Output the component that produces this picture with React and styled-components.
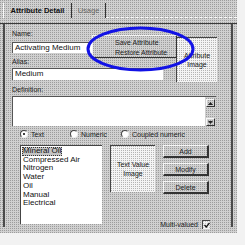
import React from "react";
import styled, { createGlobalStyle } from "styled-components";

const dither = (light, dark) =>
  `conic-gradient(at 1px 1px, ${light} 75%, ${dark} 0) 0 0 / 2px 2px`;

const GlobalStyle = createGlobalStyle`
  html, body { margin: 0; padding: 0; background: #f2f2f2; }
  body { font-family: "Liberation Sans", Arial, sans-serif; color: #1e1e1e; }
  * { box-sizing: border-box; }
`;

const Window = styled.div`
  position: relative;
  width: 237px;
  height: 233px;
  background: ${dither("#d0d0d0", "#9c9c9c")};
`;

const TabBar = styled.div`
  display: flex;
  height: 24px;
  padding: 3px 0 0 3px;
  border-bottom: 1px solid #3a3a3a;
`;

const Tab = styled.div`
  width: ${(p) => p.$w}px;
  height: 15px;
  display: flex;
  align-items: center;
  justify-content: center;
  font-size: 7.5px;
  font-weight: ${(p) => (p.$active ? "bold" : "normal")};
  color: ${(p) => (p.$active ? "#111" : "#666")};
  border-right: 1px solid #333;
  border-left: ${(p) => (p.$first ? "1px solid #fafafa" : "none")};
`;

const TabFiller = styled.div`
  flex: 1;
  height: 15px;
  border-bottom: 1px dashed #fafafa;
`;

const Panel = styled.div`
  margin-left: 3px;
  width: 230px;
  height: 203px;
  border-left: 2px solid #4a4a4a;
  border-right: 2px solid #4a4a4a;
  padding: 5px 0 0 7px;
`;

const TopRow = styled.div`
  display: flex;
  align-items: flex-start;
`;

const Fields = styled.div`
  width: 151px;
  display: flex;
  flex-direction: column;
`;

const Label = styled.div`
  font-size: 7px;
  line-height: 9px;
  height: 9px;
  margin-top: ${(p) => p.$mt || 0}px;
  color: #222;
`;

const TextBox = styled.div`
  height: ${(p) => p.$h || 11}px;
  width: ${(p) => p.$w || 151}px;
  margin-top: ${(p) => p.$mt || 0}px;
  background: #fff;
  border-top: 1px solid #555;
  border-left: 1px solid #555;
  font-size: 8px;
  line-height: 10px;
  padding-left: 2px;
  color: #111;
  white-space: nowrap;
  overflow: hidden;
`;

const ImageBox = styled.div`
  width: ${(p) => p.$w}px;
  height: ${(p) => p.$h}px;
  margin: ${(p) => p.$m || "0"};
  flex-shrink: 0;
  background: ${dither("#f4f4f4", "#b4b4b4")};
  border-top: 1px solid #444;
  border-left: 1px solid #444;
  display: flex;
  align-items: center;
  justify-content: center;
  text-align: center;
  font-size: 7px;
  line-height: 9px;
  color: #222;
`;

const TextArea = styled.div`
  margin-top: 2px;
  width: 204px;
  height: 30px;
  display: flex;
  border-top: 1px solid #555;
  border-left: 1px solid #555;
`;

const AreaBody = styled.div`
  flex: 1;
  background: #fff;
`;

const ScrollCol = styled.div`
  width: 11px;
  display: flex;
  flex-direction: column;
  justify-content: space-between;
  align-items: center;
  padding: 2px 0 0;
`;

const ScrollBtn = styled.div`
  width: 9px;
  height: 8px;
  border-top: 1px solid #f8f8f8;
  border-left: 1px solid #f8f8f8;
  border-right: 1px solid #333;
  border-bottom: 1px solid #333;
  display: flex;
  align-items: center;
  justify-content: center;
`;

const RadioRow = styled.div`
  display: flex;
  margin: 3px 0 0 8px;
  height: 10px;
  align-items: center;
`;

const RadioItem = styled.div`
  width: ${(p) => p.$w}px;
  display: flex;
  align-items: center;
  gap: 3px;
  font-size: 7px;
  color: #222;
`;

const RadioCircle = styled.span`
  width: 8px;
  height: 8px;
  border-radius: 50%;
  background: #fff;
  border: 1px solid;
  border-color: #444 #eee #eee #444;
  display: flex;
  align-items: center;
  justify-content: center;
  &::after {
    content: "";
    width: 2px;
    height: 2px;
    border-radius: 50%;
    background: ${(p) => (p.$checked ? "#000" : "transparent")};
  }
`;

const LowerRow = styled.div`
  display: flex;
  margin: 6px 0 0 8px;
  align-items: flex-start;
`;

const ListBox = styled.div`
  width: 82px;
  height: 79px;
  background: #fff;
  border-top: 1px solid #444;
  border-left: 1px solid #444;
  padding: 1px 0 0 1px;
  font-size: 8px;
  line-height: 8.7px;
  color: #111;
`;

const ListItem = styled.div`
  display: table;
  padding: 0 1px;
  background: ${(p) => (p.$selected ? "#c4c4c4" : "transparent")};
  outline: ${(p) => (p.$selected ? "1px dotted #333" : "none")};
  outline-offset: -1px;
`;

const RightCol = styled.div`
  width: 50px;
  height: 84px;
  margin-left: 5px;
  display: flex;
  flex-direction: column;
  gap: 5px;
`;

const Button = styled.div`
  margin-left: 3px;
  width: 46px;
  height: 13px;
  border-top: 1px solid #f6f6f6;
  border-left: 1px solid #f6f6f6;
  border-right: 2px solid #333;
  border-bottom: 2px solid #333;
  display: flex;
  align-items: center;
  justify-content: center;
  font-size: 7px;
  color: #222;
`;

const MultiRow = styled.div`
  margin-top: auto;
  display: flex;
  align-items: center;
  justify-content: flex-end;
  gap: 4px;
  font-size: 7px;
  color: #222;
`;

const CheckBox = styled.span`
  width: 8px;
  height: 9px;
  background: ${dither("#f4f4f4", "#c4c4c4")};
  border-top: 1px solid #444;
  border-left: 1px solid #444;
  display: flex;
  align-items: center;
  justify-content: center;
`;

const Popup = styled.div`
  position: absolute;
  left: 92px;
  top: 35px;
  width: 85px;
  height: 23px;
  background: ${dither("#d0d0d0", "#9c9c9c")};
  border-top: 1px solid #f4f4f4;
  border-left: 1px solid #f4f4f4;
  border-right: 1px solid #333;
  border-bottom: 1px solid #333;
  padding: 2px 0 0 22px;
  font-size: 7px;
  line-height: 10px;
  color: #222;
`;

const Ring = styled.svg`
  position: absolute;
  left: 86px;
  top: 26px;
  overflow: visible;
`;

const Arrow = ({ down }) => (
  <svg width="5" height="3" viewBox="0 0 5 3">
    <path d={down ? "M0 0H5L2.5 3Z" : "M0 3H5L2.5 0Z"} fill="#222" />
  </svg>
);

const items = [
  "Mineral Oil",
  "Compressed Air",
  "Nitrogen",
  "Water",
  "Oil",
  "Manual",
  "Electrical",
];

export default function App() {
  return (
    <>
      <GlobalStyle />
      <Window>
        <TabBar>
          <Tab $w={69} $active $first>
            Attribute Detail
          </Tab>
          <Tab $w={34}>Usage</Tab>
          <TabFiller />
        </TabBar>
        <Panel>
          <TopRow>
            <Fields>
              <Label>Name:</Label>
              <TextBox $mt={4}>Activating Medium</TextBox>
              <Label $mt={4}>Alias:</Label>
              <TextBox $mt={2} $h={12}>Medium</TextBox>
            </Fields>
            <ImageBox $w={41} $h={45} $m="8px 0 0 13px">
              Attribute
              <br />
              Image
            </ImageBox>
          </TopRow>
          <Label $mt={3}>Definition:</Label>
          <TextArea>
            <AreaBody />
            <ScrollCol>
              <ScrollBtn>
                <Arrow />
              </ScrollBtn>
              <ScrollBtn>
                <Arrow down />
              </ScrollBtn>
            </ScrollCol>
          </TextArea>
          <RadioRow>
            <RadioItem $w={50}>
              <RadioCircle $checked />
              Text
            </RadioItem>
            <RadioItem $w={51}>
              <RadioCircle />
              Numeric
            </RadioItem>
            <RadioItem $w={70}>
              <RadioCircle />
              Coupled numeric
            </RadioItem>
          </RadioRow>
          <LowerRow>
            <ListBox>
              {items.map((it, i) => (
                <ListItem key={it} $selected={i === 0}>
                  {it}
                </ListItem>
              ))}
            </ListBox>
            <ImageBox $w={45} $h={47} $m="0 0 0 8px">
              Text Value
              <br />
              Image
            </ImageBox>
            <RightCol>
              <Button>Add</Button>
              <Button>Modify</Button>
              <Button>Delete</Button>
              <MultiRow>
                Multi-valued
                <CheckBox>
                  <svg width="6" height="6" viewBox="0 0 6 6">
                    <path d="M0.5 3L2.3 5L5.5 0.8" stroke="#111" strokeWidth="1.3" fill="none" />
                  </svg>
                </CheckBox>
              </MultiRow>
            </RightCol>
          </LowerRow>
        </Panel>
        <Popup>
          <div>Save Attribute</div>
          <div>Restore Attribute</div>
        </Popup>
        <Ring width="110" height="46" viewBox="0 0 110 46">
          <ellipse cx="54.5" cy="23" rx="52.5" ry="21" fill="none" stroke="#1212e6" strokeWidth="3" />
        </Ring>
      </Window>
    </>
  );
}
